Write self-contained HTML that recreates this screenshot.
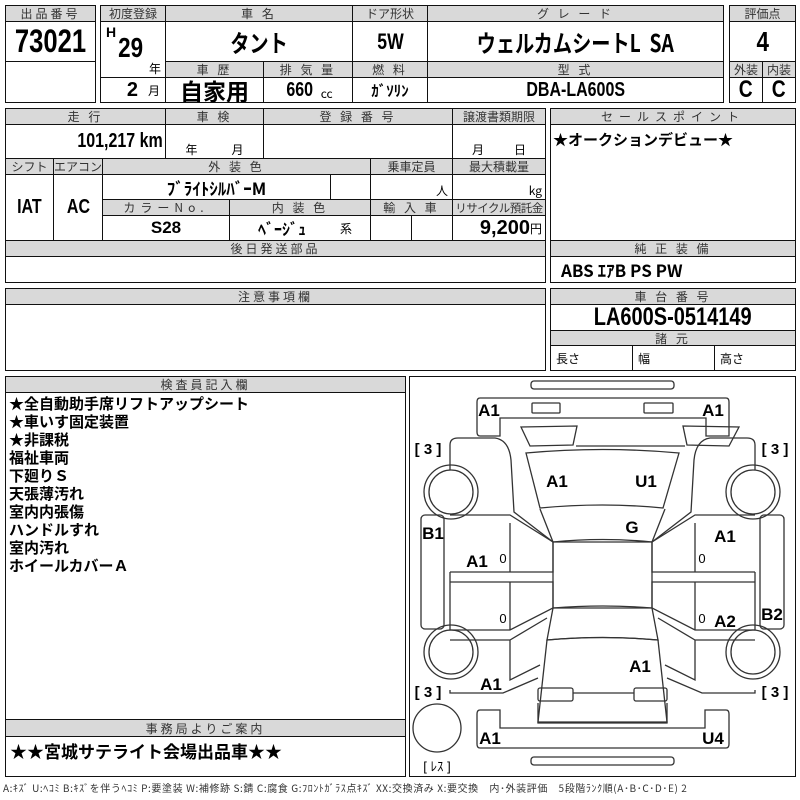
<!DOCTYPE html>
<html><head><meta charset="utf-8"><style>
*{margin:0;padding:0;box-sizing:border-box}
body{width:800px;height:800px;background:#fff;position:relative;overflow:hidden;font-family:"Liberation Sans Narrow","Liberation Sans","Noto Sans CJK JP",sans-serif;color:#000}
.c{position:absolute;border:1px solid #111;display:flex;align-items:center;justify-content:center;white-space:nowrap;overflow:hidden}
.h{background:#d9d9d9;font-size:12px;color:#333;letter-spacing:3px;font-family:"Noto Sans CJK JP",sans-serif;font-weight:400}
.v{font-weight:bold;font-size:20px}
.j{font-family:"Liberation Sans Narrow","Noto Sans CJK JP",sans-serif;font-weight:bold}
.s{font-size:12px;font-weight:400;font-family:"Noto Sans CJK JP",sans-serif}
.n{display:inline-block;transform:scaleX(.8)}
</style></head><body>
<div class="c h" style="left:5px;top:5px;width:91px;height:17px">出品番号</div>
<div class="c v" style="left:5px;top:21px;width:91px;height:41px;font-size:32px"><span class="n">73021</span></div>
<div class="c" style="left:5px;top:61px;width:91px;height:42px"></div>
<div class="c h" style="left:100px;top:5px;width:66px;height:17px;letter-spacing:0">初度登録</div>
<div class="c h" style="left:165px;top:5px;width:188px;height:17px">車 名</div>
<div class="c h" style="left:352px;top:5px;width:76px;height:17px;letter-spacing:0">ドア形状</div>
<div class="c h" style="left:427px;top:5px;width:297px;height:17px">グ レ ー ド</div>
<div class="c" style="left:100px;top:21px;width:66px;height:57px"><span style="position:absolute;left:5px;top:2px;font-weight:bold;font-size:14px">H</span><span class="n" style="position:absolute;left:14px;top:10px;font-weight:bold;font-size:28px">29</span><span class="s" style="position:absolute;right:4px;bottom:0">年</span></div>
<div class="c" style="left:100px;top:77px;width:66px;height:26px;justify-content:flex-end;padding-right:5px"><b style="font-size:20px;margin-right:10px">2</b><span class="s">月</span></div>
<div class="c v j" style="left:165px;top:21px;width:188px;height:41px;font-size:24px"><span class="n">タント</span></div>
<div class="c v" style="left:352px;top:21px;width:76px;height:41px;font-size:22px"><span class="n">5W</span></div>
<div class="c v j" style="left:427px;top:21px;width:297px;height:41px;font-size:24px"><span class="n">ウェルカムシートL&nbsp; SA</span></div>
<div class="c h" style="left:165px;top:61px;width:99px;height:17px">車 歴</div>
<div class="c h" style="left:263px;top:61px;width:90px;height:17px">排 気 量</div>
<div class="c h" style="left:352px;top:61px;width:76px;height:17px">燃 料</div>
<div class="c h" style="left:427px;top:61px;width:297px;height:17px">型 式</div>
<div class="c v j" style="left:165px;top:77px;width:99px;height:26px;font-size:23px">自家用</div>
<div class="c v" style="left:263px;top:77px;width:90px;height:26px"><span class="n">660</span><span class="s" style="margin-left:4px;margin-top:6px">cc</span></div>
<div class="c v j" style="left:352px;top:77px;width:76px;height:26px;font-size:15px">ｶﾞｿﾘﾝ</div>
<div class="c v" style="left:427px;top:77px;width:297px;height:26px"><span class="n">DBA-LA600S</span></div>
<div class="c h" style="left:729px;top:5px;width:67px;height:17px;letter-spacing:0">評価点</div>
<div class="c v" style="left:729px;top:21px;width:67px;height:41px;font-size:28px"><span class="n">4</span></div>
<div class="c h" style="left:729px;top:61px;width:34px;height:17px;letter-spacing:0">外装</div>
<div class="c h" style="left:762px;top:61px;width:34px;height:17px;letter-spacing:0">内装</div>
<div class="c v" style="left:729px;top:77px;width:34px;height:26px;font-size:24px"><span class="n">C</span></div>
<div class="c v" style="left:762px;top:77px;width:34px;height:26px;font-size:24px"><span class="n">C</span></div>
<div class="c h" style="left:5px;top:108px;width:161px;height:17px">走 行</div>
<div class="c h" style="left:165px;top:108px;width:99px;height:17px">車 検</div>
<div class="c h" style="left:263px;top:108px;width:190px;height:17px">登 録 番 号</div>
<div class="c h" style="left:452px;top:108px;width:94px;height:17px;letter-spacing:0">譲渡書類期限</div>
<div class="c v" style="left:5px;top:124px;width:161px;height:35px;justify-content:flex-end;padding-right:2px"><span class="n" style="transform-origin:right">101,217 km</span></div>
<div class="c" style="left:165px;top:124px;width:99px;height:35px;align-items:flex-end"><span class="s" style="margin-right:34px">年</span><span class="s">月</span></div>
<div class="c" style="left:263px;top:124px;width:190px;height:35px"></div>
<div class="c" style="left:452px;top:124px;width:94px;height:35px;align-items:flex-end"><span class="s" style="margin-right:30px">月</span><span class="s">日</span></div>
<div class="c h" style="left:5px;top:158px;width:49px;height:17px;letter-spacing:0">シフト</div>
<div class="c h" style="left:53px;top:158px;width:50px;height:17px;letter-spacing:0">エアコン</div>
<div class="c h" style="left:102px;top:158px;width:269px;height:17px">外 装 色</div>
<div class="c h" style="left:370px;top:158px;width:83px;height:17px;letter-spacing:0">乗車定員</div>
<div class="c h" style="left:452px;top:158px;width:94px;height:17px;letter-spacing:0">最大積載量</div>
<div class="c v" style="left:5px;top:174px;width:49px;height:67px"><span class="n">IAT</span></div>
<div class="c v" style="left:53px;top:174px;width:50px;height:67px"><span class="n">AC</span></div>
<div class="c v j" style="left:102px;top:174px;width:229px;height:26px;font-size:17px">ﾌﾞﾗｲﾄｼﾙﾊﾞｰM</div>
<div class="c" style="left:330px;top:174px;width:41px;height:26px"></div>
<div class="c" style="left:370px;top:174px;width:83px;height:26px;justify-content:flex-end;align-items:flex-end;padding-right:4px"><span class="s">人</span></div>
<div class="c" style="left:452px;top:174px;width:94px;height:26px;justify-content:flex-end;align-items:flex-end;padding-right:3px"><span class="s">kg</span></div>
<div class="c h" style="left:102px;top:199px;width:128px;height:17px;letter-spacing:5px">カラーNo.</div>
<div class="c h" style="left:229px;top:199px;width:142px;height:17px">内 装 色</div>
<div class="c h" style="left:370px;top:199px;width:83px;height:17px">輸 入 車</div>
<div class="c h" style="left:452px;top:199px;width:94px;height:17px;letter-spacing:-0.5px;font-size:11.5px">リサイクル預託金</div>
<div class="c v" style="left:102px;top:215px;width:128px;height:26px;font-size:17px">S28</div>
<div class="c v j" style="left:229px;top:215px;width:142px;height:26px;font-size:16px"><span style="margin-left:10px">ﾍﾞｰｼﾞｭ</span><span class="s" style="margin-left:34px">系</span></div>
<div class="c" style="left:370px;top:215px;width:42px;height:26px"></div>
<div class="c" style="left:411px;top:215px;width:42px;height:26px"></div>
<div class="c v" style="left:452px;top:215px;width:94px;height:26px;justify-content:flex-end;padding-right:3px">9,200<span class="s">円</span></div>
<div class="c h" style="left:5px;top:240px;width:541px;height:17px">後日発送部品</div>
<div class="c" style="left:5px;top:256px;width:541px;height:27px"></div>
<div class="c h" style="left:550px;top:108px;width:246px;height:17px;letter-spacing:6px">セールスポイント</div>
<div class="c j" style="left:550px;top:124px;width:246px;height:117px;align-items:flex-start;justify-content:flex-start;padding:4px 2px;font-size:15px">★オークションデビュー★</div>
<div class="c h" style="left:550px;top:240px;width:246px;height:17px">純 正 装 備</div>
<div class="c v j" style="left:550px;top:256px;width:246px;height:27px;justify-content:flex-start;padding-left:10px;font-size:17px">ABS ｴｱB PS PW</div>
<div class="c h" style="left:5px;top:288px;width:541px;height:17px">注意事項欄</div>
<div class="c" style="left:5px;top:304px;width:541px;height:67px"></div>
<div class="c h" style="left:550px;top:288px;width:246px;height:17px">車 台 番 号</div>
<div class="c v" style="left:550px;top:304px;width:246px;height:27px;font-size:25px"><span class="n">LA600S-0514149</span></div>
<div class="c h" style="left:550px;top:330px;width:246px;height:16px">諸 元</div>
<div class="c s" style="left:550px;top:345px;width:83px;height:26px;justify-content:flex-start;padding-left:5px">長さ</div>
<div class="c s" style="left:632px;top:345px;width:83px;height:26px;justify-content:flex-start;padding-left:5px">幅</div>
<div class="c s" style="left:714px;top:345px;width:82px;height:26px;justify-content:flex-start;padding-left:5px">高さ</div>
<div class="c h" style="left:5px;top:376px;width:401px;height:17px">検査員記入欄</div>
<div class="c j" style="left:5px;top:392px;width:401px;height:328px;align-items:flex-start;justify-content:flex-start;white-space:pre;font-size:15px;line-height:18px;padding:2px 3px">★全自動助手席リフトアップシート
★車いす固定装置
★非課税
福祉車両
下廻りＳ
天張薄汚れ
室内内張傷
ハンドルすれ
室内汚れ
ホイールカバーＡ</div>
<div class="c h" style="left:5px;top:719px;width:401px;height:18px">事務局よりご案内</div>
<div class="c j" style="left:5px;top:736px;width:401px;height:41px;align-items:flex-start;justify-content:flex-start;padding:1px 4px;font-size:17px">★★宮城サテライト会場出品車★★</div>
<div class="c" style="left:409px;top:376px;width:387px;height:401px"></div>
<div style="position:absolute;left:3px;top:780px;font-size:10px;letter-spacing:0.6px;font-family:'Noto Sans CJK JP',sans-serif;color:#333;white-space:nowrap">A:ｷｽﾞ U:ﾍｺﾐ B:ｷｽﾞを伴うﾍｺﾐ P:要塗装 W:補修跡 S:錆 C:腐食 G:ﾌﾛﾝﾄｶﾞﾗｽ点ｷｽﾞ XX:交換済み X:要交換　内･外装評価　5段階ﾗﾝｸ順(A･B･C･D･E) 2</div>
<svg style="position:absolute;left:0;top:0" width="800" height="800" fill="none" stroke="#333" stroke-width="1.3">
<rect x="531" y="381" width="143" height="8" rx="3"/>
<path d="M480 398 H726 Q729 398 729 402 V436 H706 V418 H500 V436 H480 Q477 436 477 432 V402 Q477 398 480 398Z"/>
<rect x="532" y="403" width="28" height="10" rx="1"/><rect x="644" y="403" width="29" height="10" rx="1"/>
<path d="M521 427 L577 426 L573 445 L530 446Z M683 426 L739 427 L729 446 L687 445Z M576 446 H685"/>
<path d="M526 453 Q603 446 679 453 L663 508 Q603 502 540 508Z"/>
<path d="M540 509 L553 542 Q603 537 652 542 L665 509"/>
<path d="M553 542 H652 V608 H553Z"/>
<path d="M553 608 Q603 604 652 608 L658 640 Q603 635 547 640Z"/>
<path d="M547 640 Q603 635 658 640 L667 722 H538Z"/>
<rect x="538" y="688" width="35" height="13" rx="2"/><rect x="634" y="688" width="33" height="13" rx="2"/><path d="M573 693 H634"/>
<path d="M538 703 V723 H667 V703"/>
<path d="M480 710 H500 V728 H705 V710 H726 Q729 710 729 714 V744 Q729 748 726 748 H480 Q477 748 477 744 V714 Q477 710 480 710Z"/>
<rect x="531" y="757" width="143" height="8" rx="3"/>
<path d="M450 470 V445 Q450 438 458 438 H495 Q509 440 511 460 L514 512 L553 542"/>
<path d="M450 515 H510 L553 542 V572 H450 M450 572 V582 H553 V608 L510 630 H450 Z M510 523 V572 M510 582 V630"/>
<path d="M755 470 V445 Q755 438 747 438 H710 Q696 440 694 460 L691 512 L652 542"/>
<path d="M755 515 H695 L652 542 V572 H755 M755 572 V582 H652 V608 L695 630 H755 Z M695 523 V572 M695 582 V630"/>
<path d="M450 640 H510 L547 618 M510 640 V680 L540 665 M450 690 V693 H503 L538 678"/>
<path d="M755 640 H695 L658 618 M695 640 V680 L665 665 M755 690 V693 H702 L667 678"/>
<circle cx="451" cy="492" r="27"/><circle cx="451" cy="492" r="22"/>
<circle cx="753" cy="492" r="27"/><circle cx="753" cy="492" r="22"/>
<circle cx="451" cy="652" r="27"/><circle cx="451" cy="652" r="22"/>
<circle cx="753" cy="652" r="27"/><circle cx="753" cy="652" r="22"/>
<circle cx="437" cy="728" r="24"/>
<rect x="421" y="515" width="23" height="114" rx="4"/><rect x="760" y="515" width="24" height="114" rx="4"/>
<g stroke="none" fill="#000" text-anchor="middle" font-family="Liberation Sans, sans-serif" font-weight="bold" font-size="17">
<text x="489" y="416">A1</text><text x="713" y="416">A1</text>
<text x="557" y="487">A1</text><text x="646" y="487">U1</text>
<text x="632" y="533">G</text>
<text x="433" y="539">B1</text><text x="477" y="567">A1</text>
<text x="725" y="542">A1</text><text x="725" y="627">A2</text><text x="772" y="620">B2</text>
<text x="640" y="672">A1</text><text x="491" y="690">A1</text>
<text x="490" y="744">A1</text><text x="713" y="744">U4</text>
</g>
<g stroke="none" fill="#000" font-family="Liberation Sans, sans-serif" font-size="13" text-anchor="middle">
<text x="503" y="563">0</text><text x="702" y="563">0</text><text x="503" y="623">0</text><text x="702" y="623">0</text>
</g>
<g stroke="none" fill="#000" font-family="Liberation Sans, 'Noto Sans CJK JP', sans-serif" font-size="15" text-anchor="middle">
<text x="428" y="454" font-weight="bold">[ 3 ]</text><text x="775" y="454" font-weight="bold">[ 3 ]</text>
<text x="428" y="697" font-weight="bold">[ 3 ]</text><text x="775" y="697" font-weight="bold">[ 3 ]</text>
<text x="437" y="771" font-size="13">[ ﾚｽ ]</text>
</g>
</svg>
</body></html>
